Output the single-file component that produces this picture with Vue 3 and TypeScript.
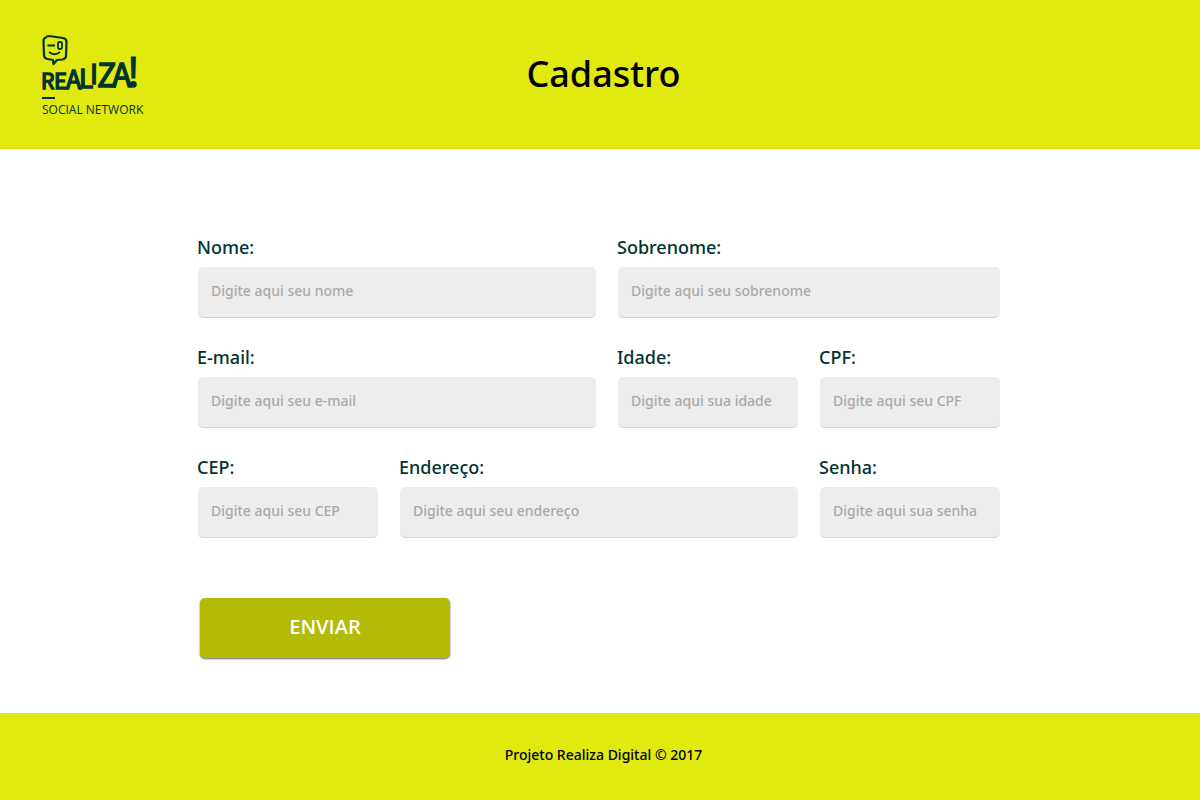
<script setup lang="ts">
import { reactive } from 'vue'

interface Field {
  id: string
  label: string
  placeholder: string
  type: string
  wide: boolean
}

interface LogoLetter {
  char: string
  x: number
  y: number
  size: number
}

const fields: Field[] = [
  { id: 'nome', label: 'Nome:', placeholder: 'Digite aqui seu nome', type: 'text', wide: true },
  { id: 'sobrenome', label: 'Sobrenome:', placeholder: 'Digite aqui seu sobrenome', type: 'text', wide: true },
  { id: 'email', label: 'E-mail:', placeholder: 'Digite aqui seu e-mail', type: 'email', wide: true },
  { id: 'idade', label: 'Idade:', placeholder: 'Digite aqui sua idade', type: 'text', wide: false },
  { id: 'cpf', label: 'CPF:', placeholder: 'Digite aqui seu CPF', type: 'text', wide: false },
  { id: 'cep', label: 'CEP:', placeholder: 'Digite aqui seu CEP', type: 'text', wide: false },
  { id: 'endereco', label: 'Endereço:', placeholder: 'Digite aqui seu endereço', type: 'text', wide: true },
  { id: 'senha', label: 'Senha:', placeholder: 'Digite aqui sua senha', type: 'password', wide: false },
]

const values = reactive<Record<string, string>>(
  Object.fromEntries(fields.map((field) => [field.id, ''])),
)

const letters: LogoLetter[] = [
  { char: 'R', x: 0, y: 54, size: 21 },
  { char: 'E', x: 13, y: 54, size: 22 },
  { char: 'A', x: 25, y: 54, size: 25 },
  { char: 'L', x: 38, y: 53, size: 26 },
  { char: 'I', x: 49, y: 49, size: 27 },
  { char: 'Z', x: 56, y: 52, size: 32 },
  { char: 'A', x: 71, y: 52, size: 32 },
  { char: '!', x: 86, y: 52, size: 39 },
]
</script>

<template>
  <div class="page">
    <header class="header">
      <a class="logo" href="#" aria-label="Realiza! Social Network">
        <svg class="mark" width="100" height="67" viewBox="0 0 100 67" aria-hidden="true">
          <path
            class="line"
            d="M5 2.5 Q5.5 1 8 1 L22 3 Q25.500 3.500 25.500 7 L25 21 Q25 24 21.500 24.500 L16 25 L12.500 29 L12 25 L6.500 24 Q3 23.500 3 20 L2.500 6 Q2.500 3 5 2.500 Z"
          />
          <path class="detail" d="M6.500 10.500 H14 M8 17 Q13.500 21.500 19 17" />
          <rect class="detail" x="17" y="7" width="4" height="7" rx="1.500" />
          <text
            v-for="letter in letters"
            :key="letter.x"
            class="letter"
            :x="letter.x"
            :y="letter.y"
            :font-size="letter.size"
          >{{ letter.char }}</text>
          <rect class="dash" x="1" y="62" width="13" height="2" />
        </svg>
        <span class="tagline">SOCIAL NETWORK</span>
      </a>
      <h1 class="title">Cadastro</h1>
    </header>

    <main class="main">
      <form class="form" @submit.prevent>
        <div class="fields">
          <div v-for="field in fields" :key="field.id" class="field" :class="{ wide: field.wide }">
            <label class="label" :for="field.id">{{ field.label }}</label>
            <input
              :id="field.id"
              v-model="values[field.id]"
              class="input"
              :type="field.type"
              :placeholder="field.placeholder"
            />
          </div>
        </div>
        <button class="submit" type="submit">ENVIAR</button>
      </form>
    </main>

    <footer class="footer">Projeto Realiza Digital © 2017</footer>
  </div>
</template>

<style>
body {
  margin: 0;
}
</style>

<style scoped>
.page {
  display: flex;
  flex-direction: column;
  min-height: 100vh;
  background: #fff;
  color: #000;
  font-family: 'Noto Sans', 'Open Sans', sans-serif;
}

.header {
  display: grid;
  grid-template-columns: 1fr auto 1fr;
  align-items: center;
  box-sizing: border-box;
  min-height: 149px;
  padding: 0 34px 0 41px;
  background: #e1e90f;
}

.logo {
  display: flex;
  flex-direction: column;
  justify-self: start;
  padding-top: 3px;
  color: #003331;
  text-decoration: none;
}

.mark {
  display: block;
  overflow: visible;
}

.line {
  fill: none;
  stroke: #003331;
  stroke-width: 2.2;
  stroke-linejoin: round;
}

.detail {
  fill: none;
  stroke: #003331;
  stroke-width: 1.8;
}

.letter {
  fill: #003331;
  stroke: #003331;
  stroke-width: 1.4;
  font-family: 'Noto Sans CJK JP', sans-serif;
  font-weight: 400;
}

.dash {
  fill: #003331;
}

.tagline {
  padding-left: 1px;
  font-family: 'Open Sans', sans-serif;
  font-size: 12px;
  font-weight: 400;
  line-height: 16px;
  white-space: nowrap;
}

.title {
  margin: 0;
  padding-bottom: 2px;
  font-size: 36px;
  font-weight: 500;
  line-height: 48px;
}

.main {
  flex: 1;
  padding: 84px 24px 53px 22px;
}

.form {
  max-width: 802px;
  margin: 0 auto;
}

.fields {
  display: grid;
  grid-template-columns: 180fr 196fr 180fr 180fr;
  gap: 25px 22px;
}

.field {
  min-width: 0;
}

.wide {
  grid-column: span 2;
}

.label {
  display: block;
  margin: 0 0 6px -1px;
  color: #003331;
  font-size: 18px;
  font-weight: 500;
  line-height: 28px;
}

.input {
  display: block;
  box-sizing: border-box;
  width: 100%;
  height: 51px;
  padding: 0 13px 3px;
  border: 0;
  border-bottom: 1px solid #d0d6d5;
  border-radius: 5px;
  background: #ededed;
  color: #003331;
  font-family: inherit;
  font-size: 14px;
  font-weight: 500;
}

.input::placeholder {
  color: #a9a9a9;
  opacity: 1;
}

.submit {
  display: block;
  width: 250px;
  height: 60px;
  margin: 60px 0 0 2px;
  padding: 0 0 3px;
  border: 0;
  border-radius: 5px;
  background: #b3bb07;
  box-shadow: 0 1px 2px rgba(0, 0, 0, 0.6);
  color: #fff;
  font-family: 'Open Sans', sans-serif;
  font-size: 20px;
  font-weight: 600;
  cursor: pointer;
}

.footer {
  box-sizing: border-box;
  min-height: 87px;
  padding: 32px 0 35px 7px;
  background: #e1e90f;
  font-size: 14px;
  font-weight: 500;
  line-height: 20px;
  text-align: center;
}
</style>
